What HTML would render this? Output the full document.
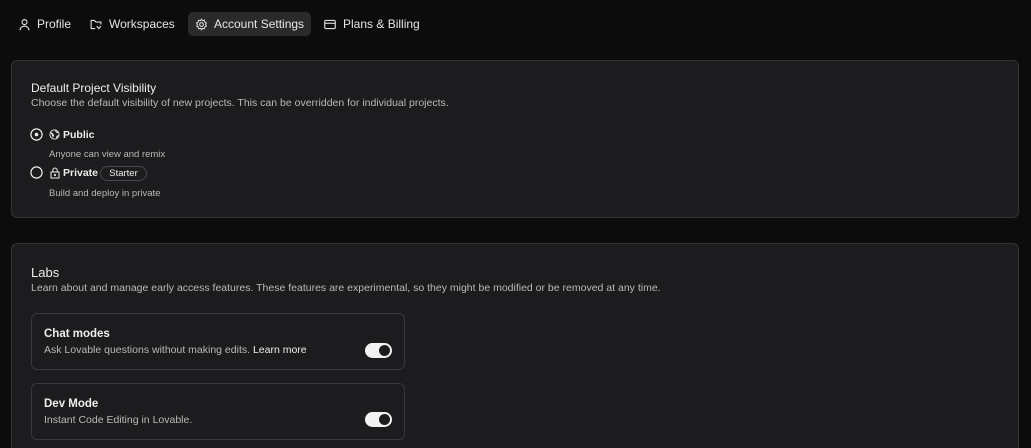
<!DOCTYPE html>
<html style="width:1031px;height:448px;overflow:hidden"><head><style>
*{box-sizing:border-box;margin:0;padding:0}
body{width:1031px;height:448px;background:#0c0c0d;font-family:"Liberation Sans",sans-serif;color:#ececec;overflow:hidden;position:relative}
.tab{position:absolute;top:12px;height:24px;display:flex;align-items:center;font-size:12px;color:#e6e6e6}
.tab svg{margin-right:6px}
.card{position:absolute;left:11px;width:1008px;background:#1c1c1e;border:1px solid #333336;border-radius:6px}
.t{position:absolute;font-size:12px;color:#eee}
.d{position:absolute;font-size:10.5px;color:#b9b9b9}
.inner{position:absolute;left:19px;width:374px;border:1px solid #38383b;border-radius:6px;height:57px}
.tog{position:absolute;right:12px;width:27px;height:15px;border-radius:8px;background:#f2f2f2}
.tog:after{content:"";position:absolute;right:2px;top:2px;width:11px;height:11px;border-radius:50%;background:#1c1c1e}
</style></head><body>
<div class="tab" style="left:18px"><svg width="13" height="13" viewBox="0 0 16 16" fill="none" stroke="#ddd" stroke-width="1.4"><circle cx="8" cy="5" r="3"/><path d="M2.5 15c0-3 2.5-5 5.5-5s5.5 2 5.5 5"/></svg>Profile</div>
<div class="tab" style="left:89px"><svg width="14" height="13" viewBox="0 0 16 16" fill="none" stroke="#ddd" stroke-width="1.4"><path d="M7 13H2V3h4l2 2h6v3"/><path d="M9 10l2.5 3 2.5-3"/></svg>Workspaces</div>
<div class="tab" style="left:188px;width:123px;background:#2a2a2c;border-radius:5px;padding-left:7px"><svg width="13" height="13" viewBox="0 0 16 16" fill="none" stroke="#ddd" stroke-width="1.3"><circle cx="8" cy="8" r="2.3"/><path d="M8 1.5l1.3 1.8 2.2-.5.5 2.2 2 1-1 2 1 2-2 1-.5 2.2-2.2-.5L8 14.5l-1.3-1.8-2.2.5-.5-2.2-2-1 1-2-1-2 2-1 .5-2.2 2.2.5z"/></svg>Account Settings</div>
<div class="tab" style="left:323px"><svg width="14" height="13" viewBox="0 0 16 16" fill="none" stroke="#ddd" stroke-width="1.4"><rect x="1.5" y="3" width="13" height="10" rx="1.5"/><path d="M1.5 6.5h13"/></svg>Plans &amp; Billing</div>

<div class="card" style="top:60px;height:158px">
<div class="t" style="left:19px;top:20px">Default Project Visibility</div>
<div class="d" style="left:19px;top:36px">Choose the default visibility of new projects. This can be overridden for individual projects.</div>
<svg style="position:absolute;left:18px;top:67px" width="13" height="13" viewBox="0 0 13 13"><circle cx="6.5" cy="6.5" r="5.6" fill="none" stroke="#eee" stroke-width="1.2"/><circle cx="6.5" cy="6.5" r="1.8" fill="#eee"/></svg>
<svg style="position:absolute;left:37px;top:68px" width="11" height="11" viewBox="0 0 12 12"><circle cx="6" cy="6" r="5" fill="none" stroke="#ddd" stroke-width="1.1"/><path d="M2 4l2 1 1 2-1 2M7 1.5l1 2 2 .5M8 10l.5-2 2-1" stroke="#ddd" fill="#ddd" stroke-width="1"/></svg>
<div class="t" style="left:51px;top:68px;font-size:10.5px;font-weight:bold">Public</div>
<div class="d" style="left:37px;top:88px;font-size:9.5px">Anyone can view and remix</div>
<svg style="position:absolute;left:18px;top:105px" width="13" height="13" viewBox="0 0 13 13"><circle cx="6.5" cy="6.5" r="5.6" fill="none" stroke="#eee" stroke-width="1.2"/></svg>
<svg style="position:absolute;left:38px;top:106px" width="10" height="12" viewBox="0 0 10 12" fill="none" stroke="#ddd" stroke-width="1.1"><rect x="1" y="5" width="8" height="6"/><path d="M2.8 5V3.3a2.2 2.2 0 014.4 0V5"/><circle cx="5" cy="8" r=".6" fill="#ddd"/></svg>
<div class="t" style="left:51px;top:106px;font-size:10.5px;font-weight:bold">Private</div>
<div style="position:absolute;left:88px;top:105px;width:47px;height:15px;border:1px solid #48484b;border-radius:8px;font-size:9.5px;color:#eee;text-align:center;line-height:13px">Starter</div>
<div class="d" style="left:37px;top:127px;font-size:9.5px">Build and deploy in private</div>
</div>

<div class="card" style="top:243px;height:220px">
<div class="t" style="left:19px;top:21px;font-size:13px">Labs</div>
<div class="d" style="left:19px;top:38px">Learn about and manage early access features. These features are experimental, so they might be modified or be removed at any time.</div>
<div class="inner" style="top:69px">
<div class="t" style="left:12px;top:14px;font-size:11.5px;font-weight:bold">Chat modes</div>
<div class="d" style="left:12px;top:30px">Ask Lovable questions without making edits. <span style="color:#eee">Learn more</span></div>
<div class="tog" style="top:29px"></div>
</div>
<div class="inner" style="top:139px">
<div class="t" style="left:12px;top:14px;font-size:11.5px;font-weight:bold">Dev Mode</div>
<div class="d" style="left:12px;top:30px">Instant Code Editing in Lovable.</div>
<div class="tog" style="top:28px"></div>
</div>
</div>
</body></html>
